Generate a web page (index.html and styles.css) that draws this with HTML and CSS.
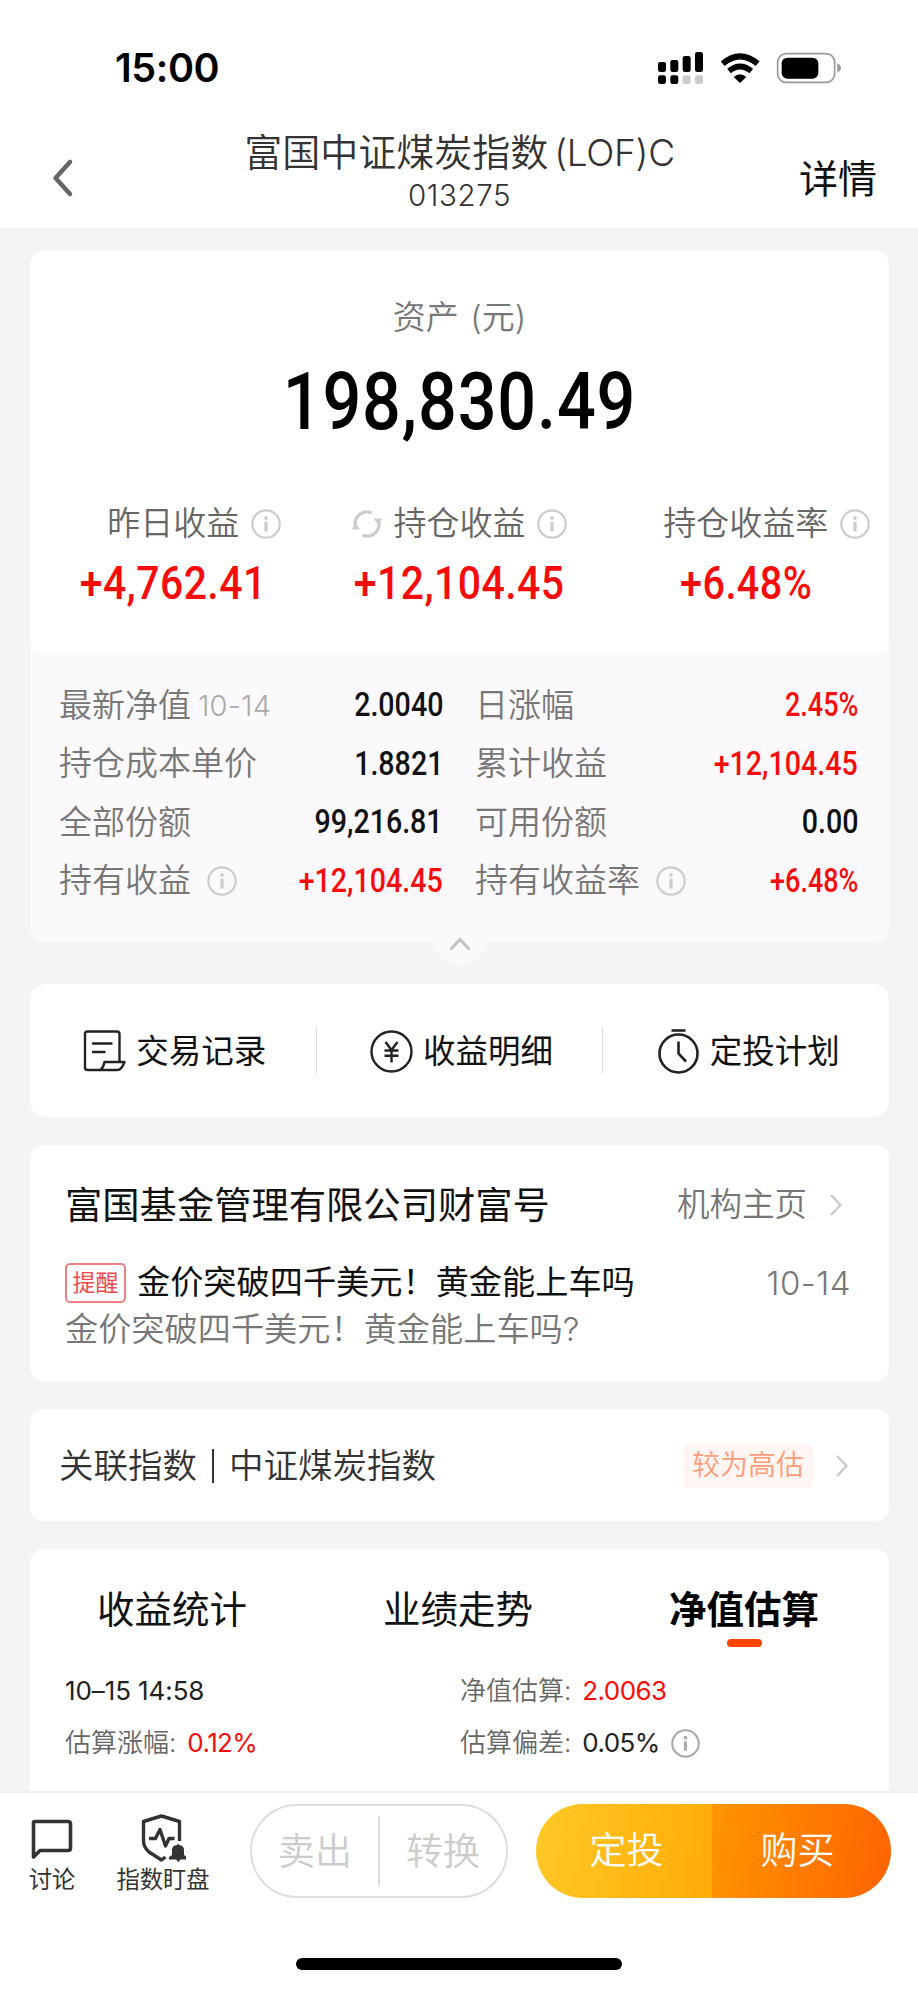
FILE: index.html
```html
<!DOCTYPE html>
<html lang="zh-CN">
<head>
<meta charset="utf-8">
<title>富国中证煤炭指数(LOF)C</title>
<link rel="stylesheet" href="styles.css">
</head>
<body>
<svg class="defs" width="0" height="0">
  <symbol id="info" viewBox="0 0 30 30"><circle cx="15" cy="15" r="13.7" fill="none" stroke="currentColor" stroke-width="2.2"/><circle cx="15" cy="9" r="1.9" fill="currentColor"/><path d="M15 12.8V22.5" stroke="currentColor" stroke-width="3.2"/></symbol>
  <symbol id="next" viewBox="0 0 14 24"><path d="M2 2l9.500 10L2 22" fill="none" stroke="currentColor" stroke-width="2.200"/></symbol>
</svg>
<div class="screen">
  <header class="top">
    <div class="status">
      <span class="time">15:00</span>
      <svg class="status-icons" width="220" height="60" viewBox="0 0 660 180">
        <rect x="54" y="66" width="24" height="30" rx="7"/><rect x="91" y="60" width="24" height="36" rx="7"/><rect x="128" y="48" width="24" height="48" rx="7"/><rect x="165" y="36" width="24" height="60" rx="7"/>
        <rect x="54" y="106" width="24" height="26" rx="7"/><rect x="91" y="106" width="24" height="26" rx="7"/><rect x="128" y="106" width="24" height="26" rx="7" fill="#ccc"/><rect x="165" y="106" width="24" height="26" rx="7" fill="#ccc"/>
        <path d="M248 71Q300 27 353 71" fill="none" stroke="#000" stroke-width="18"/>
        <path d="M267 93Q300 66 334 93" fill="none" stroke="#000" stroke-width="17"/>
        <path d="M281 111Q300 94 319 111L300 129Z"/>
        <rect x="413" y="41" width="171" height="86" rx="26" fill="none" stroke="#999" stroke-width="5"/>
        <rect x="425" y="53" width="110" height="63" rx="17"/><path d="M592 70Q603 76 603 84T592 98Z" fill="#999"/>
      </svg>
    </div>
    <div class="nav">
      <svg class="back" width="24" height="40" viewBox="0 0 24 40"><path d="M20 4L5.500 20 20 36" fill="none" stroke="#666" stroke-width="4.500" stroke-linecap="round" stroke-linejoin="round"/></svg>
      <div class="heading"><h1>富国中证煤炭指数<span class="lof">(LOF)C</span></h1><p>013275</p></div>
      <span class="detail">详情</span>
    </div>
  </header>

  <main class="content">
    <section class="asset">
      <div class="asset-main">
        <div class="asset-label">资产 (元)</div>
        <div class="asset-total num">198,830.49</div>
        <div class="gains">
          <div class="gain"><div class="gain-label">昨日收益<svg class="info after"><use href="#info"/></svg></div><div class="gain-value num">+4,762.41</div></div>
          <div class="gain"><div class="gain-label"><svg class="sync" viewBox="0 0 32 30"><g fill="none" stroke="#ccc" stroke-width="3.200"><path d="M4.800 18A11.500 11.500 0 0 1 20.500 4"/><path d="M27.300 12A11.500 11.500 0 0 1 11.500 26"/></g><path d="M.500 20.500L4.500 14.500 9 20.500ZM31.500 9.500L27 15.500 22.500 9.500Z" fill="#ccc"/></svg>持仓收益<svg class="info after"><use href="#info"/></svg></div><div class="gain-value num">+12,104.45</div></div>
          <div class="gain"><div class="gain-label">持仓收益率<svg class="info after"><use href="#info"/></svg></div><div class="gain-value num rate">+6.48%</div></div>
        </div>
      </div>
      <div class="facts">
        <div class="fact"><span>最新净值</span><small>10-14</small><b class="num">2.0040</b></div>
        <div class="fact"><span>日涨幅</span><b class="num up rate">2.45%</b></div>
        <div class="fact"><span>持仓成本单价</span><b class="num">1.8821</b></div>
        <div class="fact"><span>累计收益</span><b class="num up">+12,104.45</b></div>
        <div class="fact"><span>全部份额</span><b class="num">99,216.81</b></div>
        <div class="fact"><span>可用份额</span><b class="num">0.00</b></div>
        <div class="fact"><span>持有收益</span><svg class="info"><use href="#info"/></svg><b class="num up">+12,104.45</b></div>
        <div class="fact"><span>持有收益率</span><svg class="info"><use href="#info"/></svg><b class="num up rate">+6.48%</b></div>
      </div>
      <div class="fold"><svg width="24" height="16" viewBox="0 0 24 16"><path d="M2.500 13.500L12 3.500l9.500 10" fill="none" stroke="#c4c4c4" stroke-width="3"/></svg></div>
    </section>

    <section class="actions">
      <div class="action"><svg width="43" height="46" viewBox="0 0 43 46"><g fill="none" stroke="#222" stroke-width="2.400" stroke-linejoin="round" stroke-linecap="round"><path d="M36.500 34V6Q36.500 3.500 34 3.500H4.500Q2 3.500 2 6V39.500Q2 42 4.500 42H34.500Q38.500 42 41.500 34H21.500Q20.500 39.500 17.500 42"/><path d="M10 15.500H28.500M10 24H21.500"/></g></svg><span>交易记录</span></div>
      <i></i>
      <div class="action"><svg width="43" height="46" viewBox="0 0 43 46"><g fill="none" stroke="#222" stroke-width="2.400"><circle cx="21.500" cy="23.500" r="20"/><path d="M15.500 14l6 8 6-8M21.500 22V34.500M14.500 22.500H28.500M14.500 27.800H28.500"/></g></svg><span>收益明细</span></div>
      <i></i>
      <div class="action"><svg width="43" height="48" viewBox="0 0 43 48"><g fill="none" stroke="#222" stroke-width="2.600"><circle cx="21.500" cy="26.500" r="19"/><path d="M14.500 3.500H28.500"/><path d="M21.500 14.500V26.500L29 34.500"/></g></svg><span>定投计划</span></div>
    </section>

    <section class="org">
      <div class="org-head"><h2>富国基金管理有限公司财富号</h2><span class="org-link">机构主页</span><svg class="next"><use href="#next"/></svg></div>
      <div class="post"><span class="remind">提醒</span><span class="post-title">金价突破四千美元！黄金能上车吗</span><time>10-14</time></div>
      <p class="post-text">金价突破四千美元！黄金能上车吗?</p>
    </section>

    <section class="index-row"><span>关联指数</span><i></i><span>中证煤炭指数</span><em>较为高估</em><svg class="next"><use href="#next"/></svg></section>

    <section class="estimate">
      <div class="tabs"><span>收益统计</span><span>业绩走势</span><span class="active">净值估算</span></div>
      <div class="est-grid">
        <div class="est"><b class="stamp">10–15 14:58</b></div>
        <div class="est"><span>净值估算:</span><b class="up">2.0063</b></div>
        <div class="est"><span>估算涨幅:</span><b class="up">0.12%</b></div>
        <div class="est"><span>估算偏差:</span><b>0.05%</b><svg class="info dark"><use href="#info"/></svg></div>
      </div>
    </section>
  </main>

  <footer class="bottom">
    <div class="bar">
      <div class="tool talk"><svg width="42" height="42" viewBox="0 0 42 42"><path d="M4 2.500H37Q39.500 2.500 39.500 5V29Q39.500 31.500 37 31.500H9L2.500 38V4Q2.500 2.500 4 2.500Z" fill="none" stroke="#333" stroke-width="3.600" stroke-linejoin="round"/></svg>讨论</div>
      <div class="tool watch"><svg width="46" height="50" viewBox="0 0 46 50"><g fill="none" stroke="#333" stroke-width="3.400" stroke-linejoin="round"><path d="M39.500 27V7.500L21.500 2 3.500 7.500V27Q3.500 33 9 38L21.500 46l4-3"/><path d="M9 24.500H15.500L20 15.500 25.500 32 29 24.500H34.500"/></g><path d="M29 45.500V43l3-2V36Q32 31.500 37 31L38 29.500 39 31Q44 31.500 44 36V41l2.500 2V45.500H40.500L38.500 48 36 45.500Z" fill="#333"/></svg>指数盯盘</div>
      <div class="pair ghost"><span>卖出</span><i></i><span>转换</span></div>
      <div class="pair solid"><span class="plan">定投</span><span class="buy">购买</span></div>
    </div>
    <div class="home"></div>
  </footer>
</div>
</body>
</html>
```
FILE: styles.css
```css
* { box-sizing: border-box; margin: 0; padding: 0; }
body { font-family: Inter, "Noto Sans CJK SC", sans-serif; background: #f4f4f4; color: #111; line-height: 1; }
i, em { font-style: normal; }
.defs { position: absolute; }
.screen { width: 918px; height: 1989px; display: flex; flex-direction: column; overflow: hidden; background: #f4f4f4; white-space: nowrap; }
.num { font-family: Roboto, sans-serif; font-weight: 500; }

.top { height: 228px; background: #fff; flex: none; }
.status { height: 128px; padding: 40px 58px 0 115px; display: flex; justify-content: space-between; }
.time { font-size: 39.500px; font-weight: 600; line-height: 57px; letter-spacing: -.4px; color: #000; }
.nav { height: 100px; padding: 0 41px 0 50px; display: flex; justify-content: space-between; align-items: center; }
.back { width: 24px; margin-right: 46px; }
.heading { text-align: center; color: #333; padding-bottom: 17px; }
.heading h1 { font-size: 38px; font-weight: 350; line-height: 50px; }
.lof { font-size: 37px; margin-left: 6px; letter-spacing: -.3px; }
.heading p { font-size: 29.500px; line-height: 35px; letter-spacing: .6px; font-weight: 350; }
.detail { font-size: 39px; }

.content { flex: 1; min-height: 0; padding: 23px 29px 0 30px; }
.asset { height: 691px; background: #fbf9fb; border-radius: 14px; position: relative; margin-bottom: 42px; }
.asset-main { height: 402px; background: #fff; border-radius: 14px; text-align: center; padding-top: 46px; }
.asset-label { font-size: 33px; line-height: 40px; color: #777; font-weight: 350; word-spacing: 2px; }
.asset-total { font-size: 79px; line-height: 80px; margin-top: 25px; color: #000; letter-spacing: 1px; transform: scaleX(.865); }
.gains { display: grid; grid-template-columns: repeat(3, 1fr); margin-top: 61px; }
.gain-label { display: flex; justify-content: center; align-items: center; font-size: 33px; line-height: 40px; color: #666; font-weight: 350; }
.info { width: 30px; height: 30px; flex: none; color: #ccc; }
.info.after { margin: 1px -42px 0 12px; }
.sync { width: 32px; height: 30px; margin: 1px 10px 0 -42px; }
.gain-value { font-size: 46px; line-height: 50px; margin-top: 15px; color: #f70b0b; letter-spacing: .5px; transform: scaleX(.89); }
.gain-value.rate { transform: scaleX(.86); }
.facts { display: grid; grid-template-columns: 384px 383px; column-gap: 32px; grid-auto-rows: 58.5px; padding: 23px 0 0 29px; }
.fact { display: flex; align-items: center; font-size: 33px; color: #777; font-weight: 350; }
.fact small { font-size: 29px; color: #aaa; margin-left: 7px; letter-spacing: .2px; }
.fact b { margin-left: auto; font-size: 32.500px; color: #111; transform: scaleX(.88); transform-origin: right; }
.fact b.rate { transform: scaleX(.83); }
.fact b.up, .est b.up { color: #f70b0b; }
.fact .info { margin: 1px 0 0 16px; }
.fold { position: absolute; left: 403px; top: 660px; width: 54px; height: 54px; border-radius: 50%; background: #fbf9fb; display: flex; justify-content: center; padding-top: 25px; }

.actions { height: 133px; background: #fff; border-radius: 16px; margin-bottom: 28px; display: flex; align-items: center; }
.actions i { width: 1px; height: 47px; background: #ddd; }
.action { flex: 1; display: flex; align-items: center; justify-content: center; gap: 10px; font-size: 32.500px; padding-left: 4px; }
.action span { padding-top: 4px; }

.org { height: 236px; background: #fff; border-radius: 14px; margin-bottom: 28px; padding: 35px 38px 0 35px; }
.org-head { display: flex; align-items: center; height: 50px; }
.org-head h2 { font-size: 37.300px; font-weight: 400; flex: 1; padding-top: 2px; }
.org-link { font-size: 32.500px; color: #777; font-weight: 350; }
.next { width: 14px; height: 24px; color: #c8c8c8; flex: none; }
.org-head .next { margin: 0 8px 0 22px; }
.post { display: flex; align-items: center; height: 40px; margin-top: 33px; }
.remind { width: 61px; height: 40px; border: 2px solid #f08080; border-radius: 5px; color: #ee4b4b; font-size: 23px; line-height: 37px; text-align: center; margin-right: 11px; }
.post-title { font-size: 33.200px; flex: 1; }
.post time { font-size: 33px; color: #777; font-weight: 350; letter-spacing: .5px; }
.post-text { font-size: 33.200px; line-height: 52px; color: #777; font-weight: 350; }

.index-row { height: 112px; background: #fff; border-radius: 14px; margin-bottom: 28px; padding: 2px 40px 0 29px; display: flex; align-items: center; font-size: 34.500px; color: #333; font-weight: 350; }
.index-row i { width: 2px; height: 34px; background: #333; margin: 0 15px; }
.index-row em { margin-left: auto; width: 130px; height: 44px; line-height: 43px; border-radius: 4px; background: #fff6f3; color: #ff9c78; font-size: 28px; text-align: center; margin-right: 22px; }

.estimate { height: 300px; background: #fff; border-radius: 14px 14px 0 0; padding-top: 34px; }
.tabs { display: grid; grid-template-columns: repeat(3, 286px); text-align: center; font-size: 37.500px; line-height: 54px; height: 81px; margin-left: -1px; }
.tabs span { display: flex; flex-direction: column; align-items: center; }
.tabs .active { font-weight: 600; color: #000; }
.tabs .active::after { content: ""; width: 35px; height: 8px; border-radius: 4px; background: #ff4400; margin-top: 2px; }
.est-grid { display: grid; grid-template-columns: 395px 1fr; grid-auto-rows: 52px; padding: 1px 0 0 35px; }
.est { display: flex; align-items: center; gap: 11px; font-size: 26px; color: #666; font-weight: 350; }
.est b { font-weight: 400; color: #222; letter-spacing: -.6px; }
.est .stamp { letter-spacing: -.1px; }
.est .dark { width: 29px; height: 29px; color: #aaa; }

.bottom { height: 198px; flex: none; background: #fff; border-top: 2px solid #eee; position: relative; }
.bar { height: 105px; padding: 11px 27px 0 0; display: flex; align-items: flex-start; }
.tool { display: flex; flex-direction: column; align-items: center; font-size: 23.300px; color: #333; }
.talk { width: 104px; padding-top: 15px; gap: 7px; }
.watch { width: 118px; padding-top: 10px; gap: 4px; }
.pair { height: 94px; border-radius: 47px; display: flex; align-items: center; font-size: 37px; font-weight: 350; }
.pair span { flex: 1; text-align: center; }
.ghost { width: 258px; margin-left: 28px; border: 2px solid #ddd; color: #ccc; }
.ghost i { width: 2px; height: 70px; background: #ddd; }
.solid { width: 355px; margin-left: auto; overflow: hidden; color: #fff; line-height: 94px; }
.solid .plan { background: linear-gradient(100deg, #ffc926, #ffab06); padding-left: 5px; }
.solid .buy { background: linear-gradient(100deg, #ff9500, #ff6300); padding-right: 8px; }
.home { width: 326px; height: 12px; border-radius: 6px; background: #000; margin: 60px 0 0 296px; }
```
